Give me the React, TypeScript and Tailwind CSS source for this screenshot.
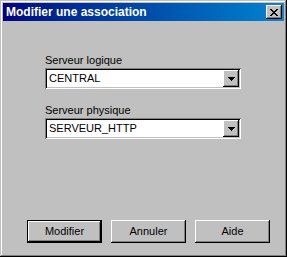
import React from 'react';

const FONT = { fontFamily: '"Liberation Sans", Arial, sans-serif' };

const raised =
  'shadow-[inset_-1px_-1px_#000000,inset_1px_1px_#ffffff,inset_-2px_-2px_#808080,inset_2px_2px_#c0c0c0]';

const ComboBox: React.FC<{ value: string }> = ({ value }) => (
  <div className="flex h-[21px] w-[196px] items-stretch bg-white p-[2px] shadow-[inset_1px_1px_#808080,inset_-1px_-1px_#ffffff,inset_2px_2px_#000000,inset_-2px_-2px_#c0c0c0]">
    <div className="flex flex-1 items-center pl-[2px] text-[11px] leading-none text-black">{value}</div>
    <div className={`flex w-[16px] items-center justify-center bg-[#c0c0c0] ${raised}`}>
      <svg width="7" height="4" viewBox="0 0 7 4">
        <path d="M0 0h7v1H0zM1 1h5v1H1zM2 2h3v1H2zM3 3h1v1H3z" fill="#000" />
      </svg>
    </div>
  </div>
);

const Button: React.FC<{ label: string; isDefault?: boolean }> = ({ label, isDefault }) => (
  <div
    className={`flex h-[23px] w-[75px] items-center justify-center bg-[#c0c0c0] text-[11px] text-black ${
      isDefault
        ? 'shadow-[inset_0_0_0_1px_#000000,inset_-2px_-2px_#000000,inset_2px_2px_#ffffff,inset_-3px_-3px_#808080]'
        : raised
    }`}
  >
    {label}
  </div>
);

export default function App() {
  return (
    <div
      className="flex h-[257px] w-[287px] flex-col bg-[#c0c0c0] p-[3px] shadow-[inset_-1px_-1px_#000000,inset_1px_1px_#c0c0c0,inset_-2px_-2px_#808080,inset_2px_2px_#ffffff]"
      style={FONT}
    >
      {/* Title bar */}
      <div className="flex h-[18px] items-center justify-between bg-gradient-to-r from-[#000080] to-[#1084d0] pl-[3px] pr-[2px]">
        <span className="text-[12px] font-bold leading-none text-white">Modifier une association</span>
        <div className={`flex h-[14px] w-[16px] items-center justify-center bg-[#c0c0c0] ${raised}`}>
          <svg width="8" height="7" viewBox="0 0 8 7">
            <path
              d="M0 0h2v1H0zM6 0h2v1H6zM1 1h2v1H1zM5 1h2v1H5zM2 2h4v1H2zM3 3h2v1H3zM2 4h4v1H2zM1 5h2v1H1zM5 5h2v1H5zM0 6h2v1H0zM6 6h2v1H6z"
              fill="#000"
            />
          </svg>
        </div>
      </div>

      {/* Fields */}
      <div className="flex flex-col pl-[42px] pt-[33px] text-[11px] text-black">
        <div className="mb-[1px] leading-[13px]">Serveur logique</div>
        <ComboBox value="CENTRAL" />
        <div className="mb-[1px] mt-[15px] leading-[13px]">Serveur physique</div>
        <ComboBox value="SERVEUR_HTTP" />
      </div>

      <div className="flex-1" />

      {/* Buttons */}
      <div className="mb-[11px] flex gap-[9px] pl-[24px]">
        <Button label="Modifier" isDefault />
        <Button label="Annuler" />
        <Button label="Aide" />
      </div>
    </div>
  );
}
